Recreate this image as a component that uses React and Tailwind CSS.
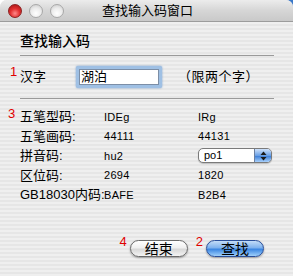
import React from 'react';

const font = { fontFamily: '"Liberation Sans", "Noto Sans CJK SC", sans-serif' };

const Light = ({ red }) => (
  <span
    className={`block w-[14px] h-[14px] rounded-full border ${
      red
        ? 'border-[#8a2020] bg-[radial-gradient(circle_at_50%_70%,#ff8a8a_0%,#e23030_45%,#a01010_100%)]'
        : 'border-[#a8a8a8] bg-[radial-gradient(circle_at_50%_70%,#ffffff_0%,#ececec_50%,#c8c8c8_100%)]'
    }`}
  />
);

const rows = [
  { label: '五笔型码:', a: 'IDEg', b: 'IRg' },
  { label: '五笔画码:', a: '44111', b: '44131' },
  { label: '拼音码:', a: 'hu2', b: null },
  { label: '区位码:', a: '2694', b: '1820' },
  { label: 'GB18030内码:', a: 'BAFE', b: 'B2B4' },
];

export default function App() {
  return (
    <div className="w-[293px] h-[276px] bg-white relative overflow-hidden" style={font}>
      <span className="absolute right-0 top-0 w-[8px] h-[8px] bg-[#3a78c8]" />
      <div className="relative w-[293px] h-[276px] flex flex-col rounded-t-[7px] overflow-hidden bg-[repeating-linear-gradient(0deg,#efefef_0px,#efefef_2px,#e6e6e6_2px,#e6e6e6_4px)]">
        {/* Title bar */}
        <div className="relative h-[22px] flex items-center border-b border-[#9c9c9c] bg-[linear-gradient(#ececec,#d6d6d6_50%,#c9c9c9)]">
          <div className="flex items-center gap-[7px] pl-[8px]">
            <Light red />
            <Light />
            <Light />
          </div>
          <div className="absolute inset-0 flex items-center justify-center text-[13px] text-black">
            <span className="pl-[2px]">查找输入码窗口</span>
          </div>
        </div>

        <div className="flex-1 flex flex-col px-[20px]">
          <div className="pt-[9px] h-[33px] text-[14px] leading-[20px] text-black font-medium">查找输入码</div>
          <div className="h-px bg-[#9a9a9a] mr-[-1px]" />

          {/* Hanzi row */}
          <div className="relative h-[42px] flex items-center text-[13px] text-black">
            <span className="absolute left-[-10px] top-[9px] text-[13px] leading-[13px] text-[#e00000]">1</span>
            <span className="w-[56px]">汉字</span>
            <div className="w-[86px] h-[22px] rounded-[2px] p-[3px] bg-[#9fc0e4] shadow-[0_0_2px_#6b95c8]">
              <div className="h-full bg-white border border-[#7c8ea6] flex items-center pl-[1px] text-[13px]">湖泊</div>
            </div>
            <span className="ml-[16px] tracking-[0.5px]">（限两个字）</span>
          </div>
          <div className="h-px bg-[#9a9a9a] mr-[-1px]" />

          {/* Code grid */}
          <div className="relative pt-[8px] grid grid-cols-[84px_94px_1fr] auto-rows-[19.5px] items-center text-black">
            <span className="absolute left-[-12px] top-[8px] text-[13px] leading-[13px] text-[#e00000]">3</span>
            {rows.map((r) => (
              <React.Fragment key={r.label}>
                <span className="text-[13px] whitespace-nowrap">{r.label}</span>
                <span className="text-[11px] tracking-[0.3px]">{r.a}</span>
                {r.b ? (
                  <span className="text-[11px] tracking-[0.3px]">{r.b}</span>
                ) : (
                  <div className="w-[74px] h-[15px] flex rounded-[5px] border border-[#7a7a7a] overflow-hidden bg-white shadow-[0_1px_1px_rgba(0,0,0,0.2)]">
                    <span className="flex-1 pl-[5px] text-[11px] leading-[13px]">po1</span>
                    <span className="w-[17px] flex flex-col items-center justify-center border-l border-[#6a7fa0] bg-[linear-gradient(#cfe2fb,#6aa0e6_50%,#3d7fd8_55%,#a8d0fb)]">
                      <svg width="7" height="10" viewBox="0 0 7 10">
                        <path d="M3.5 0.5 L6.5 4 H0.5 Z" fill="#1a1a1a" />
                        <path d="M3.5 9.5 L6.5 6 H0.5 Z" fill="#1a1a1a" />
                      </svg>
                    </span>
                  </div>
                )}
              </React.Fragment>
            ))}
          </div>

          {/* Buttons */}
          <div className="mt-auto mb-[19px] flex justify-end items-start pr-[9px] text-[14px]">
            <span className="text-[#e00000] text-[13px] leading-[13px] mt-[-5px] mr-[3px]">4</span>
            <button className="w-[58px] h-[17px] rounded-full border border-[#6a6a6a] bg-[linear-gradient(#ffffff,#f0f0f0_45%,#d8d8d8_55%,#f4f4f4)] shadow-[0_1px_2px_rgba(0,0,0,0.35)] flex items-center justify-center text-black leading-none">
              结束
            </button>
            <span className="text-[#e00000] text-[13px] leading-[13px] mt-[-5px] ml-[8px] mr-[3px]">2</span>
            <button className="w-[58px] h-[17px] rounded-full border border-[#2a4f9a] bg-[linear-gradient(#c3dcf8,#7fb2ee_45%,#3b86e2_55%,#9fd0fb)] shadow-[0_1px_2px_rgba(0,0,0,0.35)] flex items-center justify-center text-black leading-none">
              查找
            </button>
          </div>
        </div>
      </div>
    </div>
  );
}
